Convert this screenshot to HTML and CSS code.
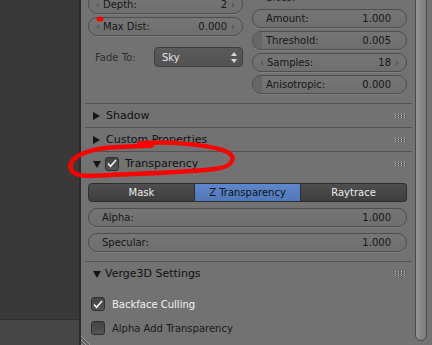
FILE: index.html
```html
<!DOCTYPE html>
<html lang="en">
<head>
    <meta charset="UTF-8">
    <title>Material - Transparency</title>
    <link rel="stylesheet" href="styles.css">
</head>
<body>
<div class="screen">
    <div class="side">
        <div class="side-top"></div>
        <div class="side-bottom"></div>
    </div>
    <div class="props">
        <div class="panel">
            <div class="cols">
                <div class="col">
                    <div class="field num"><span>Depth:</span><span>2</span></div>
                    <div class="field num"><span>Max Dist:</span><span>0.000</span></div>
                    <div class="fade-row">
                        <span class="fade-label">Fade To:</span>
                        <div class="menu">
                            <span>Sky</span>
                            <svg width="6" height="11" viewBox="0 0 6 11"><polygon points="0,4 3,0 6,4" fill="#d8d8d8"/><polygon points="0,7 6,7 3,11" fill="#d8d8d8"/></svg>
                        </div>
                    </div>
                </div>
                <div class="col">
                    <div class="col-label">Gloss:</div>
                    <div class="field"><span>Amount:</span><span>1.000</span></div>
                    <div class="field low"><span>Threshold:</span><span>0.005</span></div>
                    <div class="field num"><span>Samples:</span><span>18</span></div>
                    <div class="field low"><span>Anisotropic:</span><span>0.000</span></div>
                </div>
            </div>

            <div class="head first">
                <svg class="tri" width="8" height="8" viewBox="0 0 8 8"><polygon points="0,0 7,4 0,8" fill="#151515"/></svg>
                <span>Shadow</span>
                <svg class="grip" width="11" height="5" viewBox="0 0 11 5"><path d="M0 0h1v1H0zM3 0h1v1H3zM6 0h1v1H6zM9 0h1v1H9zM0 2h1v1H0zM3 2h1v1H3zM6 2h1v1H6zM9 2h1v1H9zM0 4h1v1H0zM3 4h1v1H3zM6 4h1v1H6zM9 4h1v1H9z" fill="#b4b4b4"/><path d="M1 0h1v1H1zM4 0h1v1H4zM7 0h1v1H7zM10 0h1v1h-1zM1 2h1v1H1zM4 2h1v1H4zM7 2h1v1H7zM10 2h1v1h-1zM1 4h1v1H1zM4 4h1v1H4zM7 4h1v1H7zM10 4h1v1h-1z" fill="#555"/></svg>
            </div>
            <div class="head">
                <svg class="tri" width="8" height="8" viewBox="0 0 8 8"><polygon points="0,0 7,4 0,8" fill="#151515"/></svg>
                <span>Custom Properties</span>
                <svg class="grip" width="11" height="5" viewBox="0 0 11 5"><path d="M0 0h1v1H0zM3 0h1v1H3zM6 0h1v1H6zM9 0h1v1H9zM0 2h1v1H0zM3 2h1v1H3zM6 2h1v1H6zM9 2h1v1H9zM0 4h1v1H0zM3 4h1v1H3zM6 4h1v1H6zM9 4h1v1H9z" fill="#b4b4b4"/><path d="M1 0h1v1H1zM4 0h1v1H4zM7 0h1v1H7zM10 0h1v1h-1zM1 2h1v1H1zM4 2h1v1H4zM7 2h1v1H7zM10 2h1v1h-1zM1 4h1v1H1zM4 4h1v1H4zM7 4h1v1H7zM10 4h1v1h-1z" fill="#555"/></svg>
            </div>
            <div class="head">
                <svg class="tri down" width="8" height="8" viewBox="0 0 8 8"><polygon points="0,1 8,1 4,8" fill="#151515"/></svg>
                <span class="box head-box"><svg width="10" height="9" viewBox="0 0 10 9"><path d="M1 4.5l2.6 2.8L9 1" stroke="#f2f2f2" stroke-width="1.6" fill="none"/></svg></span>
                <span>Transparency</span>
                <svg class="grip" width="11" height="5" viewBox="0 0 11 5"><path d="M0 0h1v1H0zM3 0h1v1H3zM6 0h1v1H6zM9 0h1v1H9zM0 2h1v1H0zM3 2h1v1H3zM6 2h1v1H6zM9 2h1v1H9zM0 4h1v1H0zM3 4h1v1H3zM6 4h1v1H6zM9 4h1v1H9z" fill="#b4b4b4"/><path d="M1 0h1v1H1zM4 0h1v1H4zM7 0h1v1H7zM10 0h1v1h-1zM1 2h1v1H1zM4 2h1v1H4zM7 2h1v1H7zM10 2h1v1h-1zM1 4h1v1H1zM4 4h1v1H4zM7 4h1v1H7zM10 4h1v1h-1z" fill="#555"/></svg>
            </div>

            <div class="modes">
                <div class="mode">Mask</div>
                <div class="mode active">Z Transparency</div>
                <div class="mode">Raytrace</div>
            </div>
            <div class="field gap"><span>Alpha:</span><span>1.000</span></div>
            <div class="field gap"><span>Specular:</span><span>1.000</span></div>

            <div class="head verge">
                <svg class="tri down" width="8" height="8" viewBox="0 0 8 8"><polygon points="0,1 8,1 4,8" fill="#151515"/></svg>
                <span>Verge3D Settings</span>
                <svg class="grip" width="11" height="5" viewBox="0 0 11 5"><path d="M0 0h1v1H0zM3 0h1v1H3zM6 0h1v1H6zM9 0h1v1H9zM0 2h1v1H0zM3 2h1v1H3zM6 2h1v1H6zM9 2h1v1H9zM0 4h1v1H0zM3 4h1v1H3zM6 4h1v1H6zM9 4h1v1H9z" fill="#b4b4b4"/><path d="M1 0h1v1H1zM4 0h1v1H4zM7 0h1v1H7zM10 0h1v1h-1zM1 2h1v1H1zM4 2h1v1H4zM7 2h1v1H7zM10 2h1v1h-1zM1 4h1v1H1zM4 4h1v1H4zM7 4h1v1H7zM10 4h1v1h-1z" fill="#555"/></svg>
            </div>
            <div class="check-row first-check on">
                <span class="box"><svg width="10" height="9" viewBox="0 0 10 9"><path d="M1 4.5l2.6 2.8L9 1" stroke="#f2f2f2" stroke-width="1.6" fill="none"/></svg></span>
                <span>Backface Culling</span>
            </div>
            <div class="check-row">
                <span class="box"></span>
                <span>Alpha Add Transparency</span>
            </div>
        </div>
        <div class="scroll"><div class="thumb"></div></div>
        <svg class="corner" width="11" height="11" viewBox="0 0 11 11">
            <path d="M0 2L9 11M0 6L5 11M0 9.5L1.5 11" stroke="#9a9a9a" stroke-width="1"/>
            <path d="M0 3.4L7.6 11M0 7.4L3.6 11" stroke="#4a4a4a" stroke-width="1"/>
        </svg>
    </div>
    <svg class="mark" width="432" height="345" viewBox="0 0 432 345">
        <ellipse cx="100" cy="19" rx="3.5" ry="2.6" fill="#ff0000"/>
        <path d="M139 143.5C165 141 205 144 224 150.5C237 155.5 235 165.5 218 168.5C190 172.5 140 173.5 100 175.5C80 177 70 174 70.5 166C71 156 88 149.5 110 147.5L152 145.5" stroke="#ff0000" stroke-width="4.5" fill="none" stroke-linecap="round" stroke-linejoin="round"/>
    </svg>
</div>
</body>
</html>
```

FILE: styles.css
```css
* {
    box-sizing: border-box;
}
body {
    margin: 0;
    font-family: "DejaVu Sans", sans-serif;
    font-size: 10px;
    color: #161616;
    background: #727272;
}
.screen {
    position: relative;
    display: flex;
    width: 432px;
    height: 345px;
    overflow: hidden;
}
.side {
    width: 81px;
    border-right: 2px solid #2b2b2b;
    display: flex;
    flex-direction: column;
}
.side-top {
    height: 319px;
    background: #393939;
}
.side-bottom {
    flex: 1;
    background: #474747;
    border-top: 1px solid #2e2e2e;
}
.props {
    position: relative;
    flex: 1;
    display: flex;
    background: #727272;
}
.panel {
    width: 334px;
    flex: none;
    padding: 0 8px 0 7px;
    margin-top: -5px;
}
.cols {
    display: grid;
    grid-template-columns: 155px 155px;
    column-gap: 9px;
}
.col {
    display: flex;
    flex-direction: column;
    gap: 3px;
}
.col-label {
    height: 11px;
    line-height: 6px;
    padding-left: 13px;
    color: #262626;
}
.field {
    position: relative;
    height: 19px;
    border: 1px solid #4e4e4e;
    border-radius: 9px;
    background: linear-gradient(#757575, #6f6f6f);
    box-shadow: 0 1px 0 rgba(255, 255, 255, 0.1);
    display: flex;
    justify-content: space-between;
    align-items: center;
    padding: 0 15px 0 13px;
}
.field span {
    position: relative;
}
.field.num {
    padding-left: 14px;
}
.field.num::before,
.field.num::after {
    content: "";
    position: absolute;
    top: 6px;
    border-top: 3px solid transparent;
    border-bottom: 3px solid transparent;
}
.field.num::before {
    left: 7px;
    border-right: 3px solid #5e5e5e;
}
.field.num::after {
    right: 7px;
    border-left: 3px solid #5e5e5e;
}
.field.low::before {
    content: "";
    position: absolute;
    left: 0;
    top: 0;
    bottom: 0;
    width: 9px;
    border-radius: 8px 0 0 8px;
    background: #666;
}
.field.gap {
    margin-top: 6px;
}
.fade-row {
    display: flex;
    align-items: center;
    height: 20px;
    margin-top: 8px;
}
.fade-label {
    padding-left: 7px;
    color: #2e2e2e;
}
.menu {
    margin-left: auto;
    width: 89px;
    height: 20px;
    display: flex;
    align-items: center;
    justify-content: space-between;
    padding: 0 5px 0 7px;
    border: 1px solid #3e3e3e;
    border-radius: 4px;
    background: linear-gradient(#5b5b5b, #525252);
    color: #e4e4e4;
}
.head {
    display: flex;
    align-items: center;
    height: 24px;
    margin: 0 -5px 0 -3px;
    padding: 0 6px 0 8px;
    border-top: 1px solid #525252;
    font-size: 11px;
    color: #111;
}
.head.first {
    margin-top: 9px;
}
.head.verge {
    margin-top: 9px;
}
.tri {
    margin-right: 5px;
}
.tri.down {
    margin-right: 4px;
}
.grip {
    margin-left: auto;
}
.box {
    width: 14px;
    height: 14px;
    flex: none;
    display: flex;
    align-items: center;
    justify-content: center;
    border: 1px solid #2f2f2f;
    border-radius: 3px;
    background: linear-gradient(#444, #565656);
    margin-right: 7px;
}
.head-box {
    margin-right: 6px;
}
.modes {
    display: flex;
    height: 19px;
    margin-top: 8px;
}
.mode {
    flex: 1;
    border: 1px solid #2e2e2e;
    background: linear-gradient(#4e4e4e, #3e3e3e);
    color: #ececec;
    text-align: center;
    line-height: 17px;
}
.mode:first-child {
    border-radius: 4px 0 0 4px;
}
.mode:last-child {
    border-radius: 0 4px 4px 0;
}
.mode + .mode {
    border-left: none;
}
.mode.active {
    background: linear-gradient(#5e88cb, #4f78bb);
    color: #111;
}
.check-row {
    display: flex;
    align-items: center;
    height: 24px;
    padding-left: 3px;
    color: #1a1a1a;
}
.check-row.first-check {
    margin-top: 7px;
}
.check-row.on {
    color: #f2f2f2;
}
.scroll {
    flex: 1;
}
.thumb {
    width: 12px;
    height: 351px;
    margin-top: -10px;
    border: 1px solid #4a4a4a;
    border-radius: 6px;
    background: linear-gradient(to right, #969696, #7a7a7a);
}
.corner {
    position: absolute;
    left: 0;
    bottom: 0;
}
.mark {
    position: absolute;
    left: 0;
    top: 0;
    pointer-events: none;
}
```
